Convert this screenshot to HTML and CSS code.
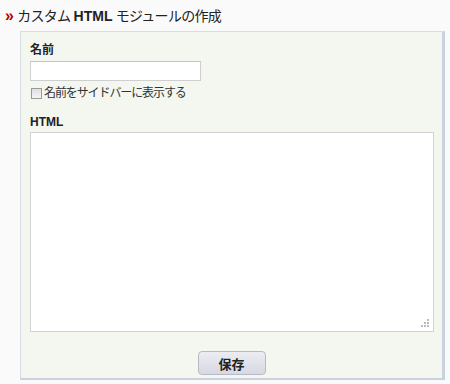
FILE: index.html
```html
<!DOCTYPE html>
<html lang="ja">
<head>
<meta charset="utf-8">
<link rel="stylesheet" href="styles.css">
</head>
<body>
<h1 class="title"><span class="raquo">»</span>カスタム <b>HTML</b> モジュールの作成</h1>
<form class="panel">
  <label class="field-label" for="name">名前</label>
  <input class="name-input" id="name" type="text">
  <label class="check"><span class="box"></span>名前をサイドバーに表示する</label>
  <label class="field-label html-label" for="html">HTML</label>
  <div class="area">
    <svg class="grip" width="8" height="8" viewBox="0 0 8 8"><g fill="#bbb"><rect x="6" y="0" width="2" height="2"/><rect x="3" y="3" width="2" height="2"/><rect x="6" y="3" width="2" height="2"/><rect x="0" y="6" width="2" height="2"/><rect x="3" y="6" width="2" height="2"/><rect x="6" y="6" width="2" height="2"/></g></svg>
  </div>
  <div class="actions"><button type="button" class="save">保存</button></div>
</form>
</body>
</html>
```
FILE: styles.css
```css
html, body { margin: 0; padding: 0; }
body {
  background: #fafafa;
  font-family: "Liberation Sans", "Noto Sans CJK JP", sans-serif;
  color: #222;
  width: 450px;
  height: 384px;
  overflow: hidden;
}
.title {
  margin: 0;
  padding: 6px 0 0 5px;
  height: 25px;
  font-size: 14px;
  letter-spacing: -0.7px;
  font-weight: normal;
  line-height: 20px;
  color: #222;
}
.title b { font-weight: bold; letter-spacing: 0; }
.raquo {
  color: #b30000;
  font-weight: bold;
  margin-right: 4px;
  font-size: 16px;
}
.panel {
  display: flex;
  flex-direction: column;
  align-items: flex-start;
  margin: 0 0 0 20px;
  width: 412px;
  height: 336px;
  background: #f4f7ef;
  border: 1px solid #d7dfe6;
  border-right: 3px solid #c9d3de;
  border-bottom: 2px solid #c9d3de;
  padding: 10px 0 0 9px;
}
.field-label {
  font-size: 12px;
  font-weight: bold;
  line-height: 16px;
  color: #222;
}
.name-input {
  margin: 3px 0 0 0;
  width: 167px;
  height: 16px;
  border: 1px solid #cfcfcf;
  border-top-color: #c4c4c4;
  padding: 1px;
  background: #fff;
}
.check {
  display: flex;
  align-items: center;
  margin-top: 5px;
  font-size: 12px;
  letter-spacing: -1.1px;
  line-height: 14px;
  color: #333;
}
.box {
  width: 9px;
  height: 9px;
  border: 1px solid #999;
  background: linear-gradient(#e0e0e0, #f4f4f4);
  margin: 0 2px 0 1px;
}
.html-label { margin-top: 14px; }
.area {
  position: relative;
  margin-top: 2px;
  width: 402px;
  height: 198px;
  background: #fff;
  border: 1px solid #d2d2d2;
}
.grip { position: absolute; right: 4px; bottom: 4px; }
.actions {
  align-self: stretch;
  display: flex;
  justify-content: center;
  margin-top: 19px;
  padding-right: 9px;
}
.save {
  width: 68px;
  height: 24px;
  border: 1px solid #b9b9c6;
  border-radius: 4px;
  background: linear-gradient(#ececf2, #d8d8e4);
  font-family: "Noto Sans CJK JP", sans-serif;
  font-size: 13px;
  font-weight: bold;
  color: #222;
  padding: 0;
}
```
